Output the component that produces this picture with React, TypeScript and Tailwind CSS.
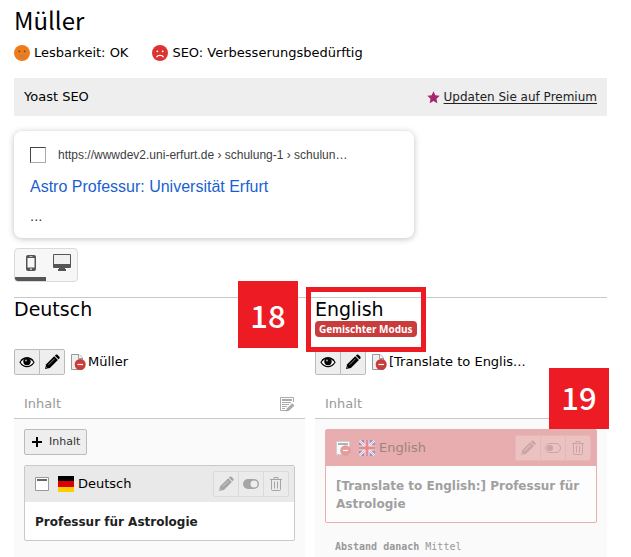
import React from 'react';

const sans = "font-['DejaVu_Sans',Verdana,sans-serif]";

function Eye() {
  return (
    <svg width="16" height="16" viewBox="0 0 16 16" aria-hidden="true">
      <path d="M1 8.3C2.8 5.3 5.2 3.8 8 3.8s5.2 1.5 7 4.5c-1.8 2.9-4.2 4.4-7 4.4S2.8 11.200 1 8.300z" fill="#fff" stroke="#000" strokeWidth="1.200" />
      <path d="M2 6.500C5 3 11 3 14 6.500" fill="none" stroke="#000" strokeWidth="1.300" />
      <circle cx="8" cy="7.600" r="3.700" fill="#000" />
      <circle cx="7" cy="6.500" r="1" fill="#aaa" />
    </svg>
  );
}

function Pencil() {
  return (
    <svg width="16" height="16" viewBox="0 0 16 16" aria-hidden="true" fill="currentColor">
      <path d="M1 15l1.200-4.800 8-7.900 3.700 3.700-8 7.900z" />
      <path d="M10.900 1.700l.9-.9c.5-.5 1.100-.4 1.600 0l2 2c.4.400.4 1.100 0 1.600l-.9.900z" />
      <path d="M4.500 10.800l6-6M2.200 13l.9.900" stroke="#eee" strokeOpacity=".7" strokeWidth=".8" />
    </svg>
  );
}

function Toggle({ on }: { on: boolean }) {
  return on ? (
    <svg width="16" height="16" viewBox="0 0 16 16" aria-hidden="true">
      <rect x="0" y="3" width="16" height="10" rx="5" fill="currentColor" />
      <circle cx="11" cy="8" r="3.500" fill="#eee" />
    </svg>
  ) : (
    <svg width="16" height="16" viewBox="0 0 16 16" aria-hidden="true">
      <rect x=".5" y="3.500" width="15" height="9" rx="4.500" fill="none" stroke="currentColor" />
      <circle cx="5" cy="8" r="3" fill="currentColor" />
    </svg>
  );
}

function Trash() {
  return (
    <svg width="16" height="16" viewBox="0 0 16 16" aria-hidden="true" fill="none" stroke="currentColor">
      <path d="M2 3.500h12M6 3V1.500h4V3M3.500 4v9.500q0 1 1 1h7q1 0 1-1V4M6.500 5.500v7M9.500 5.500v7" />
    </svg>
  );
}

function HiddenPage() {
  return (
    <svg width="16" height="16" viewBox="0 0 16 16" aria-hidden="true">
      <path d="M1.500.5H9L12.500 4v11.500h-11z" fill="#efefef" stroke="#999" />
      <path d="M8.500.5v4h4" fill="#fff" stroke="#999" />
      <circle cx="10.200" cy="10.500" r="5.500" fill="#c83c3c" />
      <path d="M7.500 10.500h5.500" stroke="#fff" strokeWidth="1.200" />
    </svg>
  );
}

function Face({ sad }: { sad: boolean }) {
  return (
    <svg width="16" height="16" viewBox="0 0 16 16" aria-hidden="true">
      <circle cx="8" cy="8" r="8" fill={sad ? '#dc3232' : '#ee7c1b'} />
      <circle cx="5.300" cy="6.300" r=".9" fill={sad ? '#fff' : '#6d4520'} />
      <circle cx="10.700" cy="6.300" r=".9" fill={sad ? '#fff' : '#6d4520'} />
      {sad ? (
        <path d="M4.500 12.300C5.500 9.800 10.500 9.800 11.500 12.300" fill="none" stroke="#fff" strokeWidth="1.300" />
      ) : (
        <path d="M5 11h6" stroke="#b5845a" strokeWidth="1.800" />
      )}
    </svg>
  );
}

function GermanFlag() {
  return (
    <svg width="16" height="16" viewBox="0 0 16 16" aria-hidden="true">
      <path d="M0 0h16v5H0z" fill="#000" />
      <path d="M0 5h16v6H0z" fill="#d00" />
      <path d="M0 11h16v5H0z" fill="#ffce00" />
    </svg>
  );
}

function BritishFlag() {
  return (
    <svg width="16" height="16" viewBox="0 0 16 16" aria-hidden="true">
      <path d="M0 0h16v16H0z" fill="#8f91c0" />
      <path d="M0 0l16 16M16 0L0 16" stroke="#f5eeee" strokeWidth="2.400" />
      <path d="M0 0l16 16M16 0L0 16" stroke="#e89a9f" strokeWidth=".8" />
      <path d="M8 0v16M0 8h16" stroke="#f5eeee" strokeWidth="5" />
      <path d="M8 0v16M0 8h16" stroke="#e58a90" strokeWidth="3" />
    </svg>
  );
}

function ContentIcon({ hidden }: { hidden: boolean }) {
  return hidden ? (
    <svg width="16" height="16" viewBox="0 0 16 16" aria-hidden="true">
      <path d="M1.500 1.500h13v13h-13z" fill="#fbfbfb" stroke="#cfcfcf" />
      <path d="M3 3h10v2H3z" fill="#b0b0b0" />
      <circle cx="10.500" cy="10.500" r="5.300" fill="#e39b9b" />
      <path d="M8 10.500h5" stroke="#fff" strokeWidth="1.200" />
    </svg>
  ) : (
    <svg width="16" height="16" viewBox="0 0 16 16" aria-hidden="true">
      <path d="M1.500 1.500h13v13h-13z" fill="#fff" stroke="#999" />
      <path d="M3 3h10v2H3z" fill="#666" />
    </svg>
  );
}

function NoteIcon() {
  return (
    <svg width="16" height="16" viewBox="0 0 16 16" aria-hidden="true" fill="none" stroke="#aaa">
      <path d="M8 14.500H1.500v-13h13V6" />
      <path d="M3 4h10" strokeWidth="2" />
      <path d="M3 6.500h9M3 8.500h7M3 10.500h5M3 12.500h3" />
      <path d="M7 15.500l.8-3 5.500-5.200 2.200 2.200-5.500 5.200z" fill="#aaa" stroke="none" />
    </svg>
  );
}

function EditBar() {
  const base = 'flex h-[26px] w-[26px] items-center justify-center border border-[#bbb] bg-[#eee]';
  return (
    <div className="flex shrink-0 text-black">
      <button aria-label="Anzeigen" className={`${base} rounded-l-xs`}><Eye /></button>
      <button aria-label="Bearbeiten" className={`${base} -ml-px rounded-r-xs`}><Pencil /></button>
    </div>
  );
}

function ActionBar({ muted }: { muted: boolean }) {
  const base = `flex h-[26px] w-[26px] items-center justify-center border ${
    muted ? 'border-[#e6b7b7] bg-[#eac2c2] text-[#cda3a3]' : 'border-[#dadada] bg-[#ebebeb] text-[#a5a5a5]'
  }`;
  return (
    <div className="ml-auto flex shrink-0">
      <button aria-label="Bearbeiten" className={`${base} rounded-l-xs`}><Pencil /></button>
      <button aria-label="Sichtbarkeit" className={`${base} -ml-px`}><Toggle on={!muted} /></button>
      <button aria-label="Löschen" className={`${base} -ml-px rounded-r-xs`}><Trash /></button>
    </div>
  );
}

function ColumnHead({ note }: { note: boolean }) {
  return (
    <div className="mt-[14px] flex h-[30px] items-center justify-between border-b border-[#c9c9c9] px-[10px] text-[13px] text-[#999]">
      <h3>Inhalt</h3>
      {note && <button aria-label="Spalte bearbeiten"><NoteIcon /></button>}
    </div>
  );
}

export default function App() {
  return (
    <main className={`relative flex min-h-screen flex-col bg-white pr-6 pl-[14px] pt-0.5 text-[13px] text-black ${sans}`}>
      <h1 className="font-['Noto_Sans_CJK_SC','Noto_Sans',sans-serif] text-[24px] leading-[36px]">Müller</h1>
      <div className="mt-1.5 flex gap-6 leading-[18px]">
        <span className="flex items-center gap-1"><Face sad={false} />Lesbarkeit: OK</span>
        <span className="flex items-center gap-1"><Face sad />SEO: Verbesserungsbedürftig</span>
      </div>

      <div className="mt-4 flex h-[38px] items-center justify-between bg-[#eee] px-[10px]">
        <span>Yoast SEO</span>
        <a href="#premium" className="flex items-center gap-1 text-[12px] text-[#222]">
          <svg width="13" height="13" viewBox="0 0 12 12" aria-hidden="true">
            <path d="M6 .3l1.700 3.600 4 .5-2.900 2.800.7 4L6 9.300l-3.500 1.900.7-4L.3 4.400l4-.5z" fill="#a4286a" />
          </svg>
          <span className="underline underline-offset-2">Updaten Sie auf Premium</span>
        </a>
      </div>

      <section className="mt-[15px] h-[107px] w-full max-w-[400px] rounded-lg bg-white px-4 pt-4 font-['Liberation_Sans',Arial,sans-serif] shadow-[0_1px_6px_rgba(32,33,36,0.28)]">
        <div className="flex h-4 items-center text-[12px] text-[#3c4043]">
          <span className="mr-3 h-4 w-4 border border-t-[#444] border-l-[#444] border-r-[#aaa] border-b-[#aaa]" />
          https://wwwdev2.uni-erfurt.de › schulung-1 › schulun…
        </div>
        <a href="#preview" className="mt-3 block text-[16px] leading-6 text-[#1a5fd0]">Astro Professur: Universität Erfurt</a>
        <p className={`mt-2.5 leading-4 text-[#303038] ${sans}`}>...</p>
      </section>

      <div className="mt-[10px] flex h-[34px] w-16 overflow-hidden rounded-sm border border-[#dadada] bg-[#f7f7f7]">
        <button aria-label="Mobile Vorschau" className="flex flex-1 items-center justify-center border-b-4 border-[#555]">
          <svg width="10" height="16" viewBox="0 0 10 16" aria-hidden="true">
            <rect width="10" height="16" rx="2" fill="#555" />
            <path d="M1.500 3h7v9.500h-7z" fill="#f7f7f7" />
            <path d="M3.500 1.500h3" stroke="#bbb" />
            <circle cx="5" cy="14.200" r=".9" fill="#ddd" />
          </svg>
        </button>
        <button aria-label="Desktop Vorschau" className="flex flex-1 justify-center pt-1">
          <svg width="18" height="18" viewBox="0 0 18 18" aria-hidden="true">
            <path d="M1 1h16q1 0 1 1v12q0 1-1 1h-5v1h1v2H5v-2h1v-1H1q-1 0-1-1V2q0-1 1-1z" fill="#555" />
            <path d="M1 2h16v9H1z" fill="#f0f0f0" />
          </svg>
        </button>
      </div>

      <div className="mt-[15px] grid flex-1 grid-cols-[291fr_292fr] gap-x-[10px] border-t border-[#c9c9c9]">
        <section className="flex min-w-0 flex-col">
          <h2 className="h-[51px] text-[19px] leading-[22px]">Deutsch</h2>
          <div className="flex items-center">
            <EditBar />
            <span className="ml-[5px] flex items-center gap-0.5"><HiddenPage />Müller</span>
          </div>
          <ColumnHead note />
          <div className="flex-1 bg-[#fafafa] p-[10px]">
            <button className="flex h-[26px] items-center gap-1.5 rounded-xs border border-[#bbb] bg-[#eee] px-1.5 text-[11px] text-[#333]">
              <svg width="12" height="12" viewBox="0 0 12 12" aria-hidden="true"><path d="M6 1v10M1 6h10" stroke="#000" strokeWidth="2" /></svg>
              Inhalt
            </button>
            <article className="mt-[10px] rounded-xs border border-[#c9c9c9] bg-white">
              <header className="flex h-9 items-center bg-[#e9e9e9] pr-[5px] pl-[9px]">
                <ContentIcon hidden={false} />
                <span className="ml-2 flex items-center gap-1"><GermanFlag />Deutsch</span>
                <ActionBar muted={false} />
              </header>
              <p className="px-[10px] pt-[11px] pb-[9px] text-[12px] leading-[18px] font-bold text-[#212121]">Professur für Astrologie</p>
            </article>
          </div>
        </section>

        <section className="flex min-w-0 flex-col">
          <div className="h-[51px]">
            <h2 className="text-[19px] leading-[22px]">English</h2>
            <span className="mt-px block h-4 w-fit rounded-sm bg-[#c83c3c] px-1 font-['Noto_Sans',sans-serif] text-[10px] leading-4 font-bold text-white">Gemischter Modus</span>
          </div>
          <div className="flex items-center">
            <EditBar />
            <span className="ml-[5px] flex items-center gap-0.5"><HiddenPage />[Translate to Englis...</span>
          </div>
          <ColumnHead note={false} />
          <div className="flex-1 bg-[#fafafa] px-[10px] pt-[10px]">
            <article className="rounded-xs border border-[#e8adae] bg-[#fdfdfd]">
              <header className="flex h-9 items-center bg-[#e8adae] pr-[5px] pl-[9px] text-[#9c8484]">
                <ContentIcon hidden />
                <span className="ml-2 flex items-center gap-1"><BritishFlag />English</span>
                <ActionBar muted />
              </header>
              <p className="px-[10px] pt-[11px] pb-[9px] text-[12px] leading-[18px] font-bold text-[#a0a0a0]">[Translate to English:] Professur für Astrologie</p>
            </article>
            <p className="mt-4 px-[10px] font-['DejaVu_Sans_Mono',monospace] text-[10px] leading-4 text-[#999]">
              <b>Abstand danach</b> Mittel
            </p>
          </div>
        </section>
      </div>

      <div className="absolute top-[281px] left-[238px] h-[67px] w-[60px] bg-[#ed1c24] text-center font-['Liberation_Sans_Narrow','Noto_Sans_CJK_SC',sans-serif] text-[31px] leading-[67px] font-medium text-white">18</div>
      <div className="absolute top-[287px] left-[306px] h-[65px] w-[120px] border-[5px] border-[#ed1c24]" />
      <div className="absolute top-[368px] left-[549px] h-[61px] w-[60px] bg-[#ed1c24] text-center font-['Liberation_Sans_Narrow','Noto_Sans_CJK_SC',sans-serif] text-[31px] leading-[57px] font-medium text-white">19</div>
    </main>
  );
}
